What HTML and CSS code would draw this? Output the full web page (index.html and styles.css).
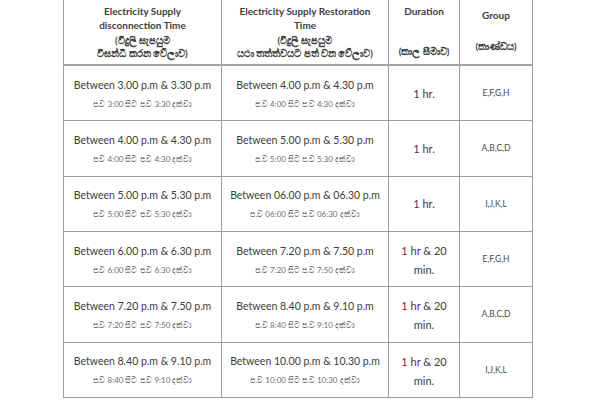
FILE: index.html
```html
<!DOCTYPE html>
<html>
<head>
<meta charset="utf-8">
<link rel="stylesheet" href="styles.css">
</head>
<body>
<table class="sched">
  <colgroup>
    <col class="c1"><col class="c2"><col class="c3"><col class="c4">
  </colgroup>
  <thead>
    <tr>
      <th class="hd">
        <div class="en">Electricity Supply<br>disconnection Time</div>
        <div class="si">(විදුලි සැපයුම<br>විසන්ධි කරන වේලාව)</div>
      </th>
      <th class="hd">
        <div class="en">Electricity Supply Restoration<br>Time</div>
        <div class="si">(විදුලි සැපයුම<br>යථා තත්ත්වයට පත් වන වේලාව)</div>
      </th>
      <th class="hd dur">
        <div class="en">Duration</div>
        <div class="si">(කාල සීමාව)</div>
      </th>
      <th class="hd grp">
        <div class="en">Group</div>
        <div class="si">(කාණ්ඩය)</div>
      </th>
    </tr>
  </thead>
  <tbody>
    <tr>
      <td><div class="t">Between 3.00 p.m &amp; 3.30 p.m</div><div class="s">ප.ව 3:00 සිට ප.ව 3:30 දක්වා</div></td>
      <td><div class="t">Between 4.00 p.m &amp; 4.30 p.m</div><div class="s">ප.ව 4:00 සිට ප.ව 4:30 දක්වා</div></td>
      <td class="d">1 hr.</td>
      <td class="g">E,F,G,H</td>
    </tr>
    <tr>
      <td><div class="t">Between 4.00 p.m &amp; 4.30 p.m</div><div class="s">ප.ව 4:00 සිට ප.ව 4:30 දක්වා</div></td>
      <td><div class="t">Between 5.00 p.m &amp; 5.30 p.m</div><div class="s">ප.ව 5:00 සිට ප.ව 5:30 දක්වා</div></td>
      <td class="d">1 hr.</td>
      <td class="g">A,B,C,D</td>
    </tr>
    <tr>
      <td><div class="t">Between 5.00 p.m &amp; 5.30 p.m</div><div class="s">ප.ව 5:00 සිට ප.ව 5:30 දක්වා</div></td>
      <td><div class="t">Between 06.00 p.m &amp; 06.30 p.m</div><div class="s">ප.ව 06:00 සිට ප.ව 06:30 දක්වා</div></td>
      <td class="d">1 hr.</td>
      <td class="g">I,J,K,L</td>
    </tr>
    <tr>
      <td><div class="t">Between 6.00 p.m &amp; 6.30 p.m</div><div class="s">ප.ව 6:00 සිට ප.ව 6:30 දක්වා</div></td>
      <td><div class="t">Between 7.20 p.m &amp; 7.50 p.m</div><div class="s">ප.ව 7:20 සිට ප.ව 7:50 දක්වා</div></td>
      <td class="d2"><div class="dl">1 hr &amp; 20<br>min.</div></td>
      <td class="g">E,F,G,H</td>
    </tr>
    <tr>
      <td><div class="t">Between 7.20 p.m &amp; 7.50 p.m</div><div class="s">ප.ව 7:20 සිට ප.ව 7:50 දක්වා</div></td>
      <td><div class="t">Between 8.40 p.m &amp; 9.10 p.m</div><div class="s">ප.ව 8:40 සිට ප.ව 9:10 දක්වා</div></td>
      <td class="d2"><div class="dl">1 hr &amp; 20<br>min.</div></td>
      <td class="g">A,B,C,D</td>
    </tr>
    <tr>
      <td><div class="t">Between 8.40 p.m &amp; 9.10 p.m</div><div class="s">ප.ව 8:40 සිට ප.ව 9:10 දක්වා</div></td>
      <td><div class="t">Between 10.00 p.m &amp; 10.30 p.m</div><div class="s">ප.ව 10:00 සිට ප.ව 10:30 දක්වා</div></td>
      <td class="d2"><div class="dl">1 hr &amp; 20<br>min.</div></td>
      <td class="g">I,J,K,L</td>
    </tr>
  </tbody>
</table>
</body>
</html>
```

FILE: styles.css
```css
html, body {
  margin: 0;
  padding: 0;
  background: #fff;
}
body {
  padding-left: 63px;
  font-family: Lato, "Open Sans", "Liberation Sans", sans-serif;
  color: #3a3a3a;
}
.sched {
  border-collapse: collapse;
  table-layout: fixed;
  width: 470px;
}
.c1 { width: 158px; }
.c2 { width: 167px; }
.c3 { width: 71px; }
.c4 { width: 73px; }
.sched th, .sched td {
  border: 1px solid #9e9e9e;
  text-align: center;
  padding: 0;
}
.sched thead th {
  border-top: none;
  border-bottom: 2px solid #a4a4a4;
  height: 64px;
  vertical-align: top;
  font-weight: bold;
  font-size: 10px;
  line-height: 14px;
  color: #404040;
}
.hd .en { padding-top: 4px; }
.hd .si { font-size: 9.5px; line-height: 13px; margin-top: 2px; }
.dur .si { margin-top: 27px; }
.grp .en { padding-top: 8px; }
.grp .si { margin-top: 18px; }
.sched tbody td {
  height: 54.33px;
  vertical-align: middle;
  font-size: 10px;
}
.t {
  font-size: 10.5px;
  line-height: 14px;
  color: #3c3c3c;
  margin-top: 1px;
}
.s {
  font-size: 8px;
  line-height: 12px;
  margin-top: 6px;
  color: #6e6e6e;
}
.sched tbody td.d { font-size: 11px; color: #3c3c3c; }
.sched tbody td.d2 { font-size: 11px; color: #3c3c3c; }
.dl { line-height: 19px; margin-top: 2px; }
.sched tbody td.g { font-size: 8.5px; color: #4a4a4a; }
```
